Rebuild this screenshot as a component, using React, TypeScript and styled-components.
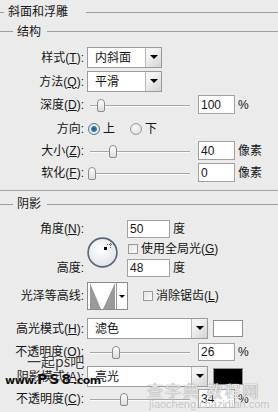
import styled, { createGlobalStyle } from 'styled-components';

const Global = createGlobalStyle`
  html, body {
    margin: 0;
    padding: 0;
    background: #ebebeb;
  }
  body {
    font-family: 'Liberation Sans', 'Noto Sans CJK SC', sans-serif;
    font-size: 12px;
    color: #161616;
  }
`;

const Panel = styled.div`
  position: relative;
  width: 278px;
  height: 412px;
  overflow: hidden;
  background: #ebebeb;
`;

const Legend = styled.div<{ $h: number; $lead: number; $gap: number }>`
  display: flex;
  align-items: center;
  height: ${(p) => p.$h}px;
  line-height: 1;
  white-space: nowrap;
  &::before {
    content: '';
    width: ${(p) => p.$lead}px;
    height: 1px;
    background: #9e9e9e;
    margin-right: 4px;
  }
  &::after {
    content: '';
    flex: 1;
    height: 1px;
    background: #9e9e9e;
    margin-left: ${(p) => p.$gap}px;
  }
`;

const Separator = styled.div`
  margin-top: 8px;
  height: 1px;
  background: #a2a2a2;
`;

const Row = styled.div<{ $h: number; $mt?: number }>`
  display: flex;
  align-items: center;
  height: ${(p) => p.$h}px;
  margin-top: ${(p) => p.$mt ?? 0}px;
  line-height: 1;
  white-space: nowrap;
`;

const Label = styled.span`
  box-sizing: border-box;
  width: 87px;
  padding-right: 3px;
  text-align: right;
  white-space: nowrap;
`;

const Select = styled.div<{ $w: number }>`
  box-sizing: border-box;
  display: flex;
  width: ${(p) => p.$w}px;
  height: 100%;
  border: 1px solid #9b9b9b;
  background: #fff;
`;

const SelectText = styled.span`
  flex: 1;
  display: flex;
  align-items: center;
  padding-left: 7px;
`;

const DropBtn = styled.span`
  width: 15px;
  display: flex;
  align-items: center;
  justify-content: center;
  border-left: 1px solid #b8b8b8;
  background: linear-gradient(135deg, #f4f4f4 30%, #d2d2d2);
  &::after {
    content: '';
    margin-top: -1px;
    border-left: 4px solid transparent;
    border-right: 4px solid transparent;
    border-top: 4px solid #000;
  }
`;

const Swatch = styled.span<{ $color: string }>`
  box-sizing: border-box;
  width: 30px;
  height: 17px;
  margin-left: 5px;
  border: 1px solid #8f8f8f;
  background: ${(p) => p.$color};
`;

const Slider = styled.div`
  position: relative;
  width: 111px;
  height: 100%;
  &::before {
    content: '';
    position: absolute;
    left: 3px;
    width: 100px;
    top: 50%;
    height: 1px;
    background: #a6a6a6;
    box-shadow: 0 1px 0 #fafafa;
  }
`;

const Thumb = styled.span`
  position: absolute;
  top: 50%;
  width: 6px;
  height: 11px;
  margin-top: -6px;
  margin-left: -4px;
  border: 1px solid #8b8b8b;
  border-radius: 4px 4px 2px 2px;
  background: linear-gradient(#ffffff, #dcdcdc);
`;

const NumBox = styled.span<{ $w?: number }>`
  box-sizing: border-box;
  display: flex;
  align-items: center;
  width: ${(p) => p.$w ?? 37}px;
  height: 100%;
  padding-left: 2px;
  border: 1px solid #a2a2a2;
  background: #fff;
`;

const Unit = styled.span`
  margin-left: 3px;
`;

const Radio = styled.span<{ $on?: boolean }>`
  box-sizing: border-box;
  width: 12px;
  height: 12px;
  border-radius: 50%;
  border: 1px solid ${(p) => (p.$on ? '#5d7388' : '#9a9a9a')};
  background: ${(p) =>
    p.$on
      ? 'radial-gradient(circle, #1d4d78 0, #3f7fae 2.5px, #e9eef2 3.5px, #cfd6dd 100%)'
      : 'radial-gradient(circle at 40% 40%, #fbfbfb, #d4d4d4)'};
`;

const RadioText = styled.span<{ $gap: number }>`
  margin-left: 3px;
  margin-right: ${(p) => p.$gap}px;
`;

const Check = styled.span<{ $ml: number }>`
  box-sizing: border-box;
  width: 10px;
  height: 10px;
  margin-left: ${(p) => p.$ml}px;
  margin-right: 3px;
  border: 1px solid #9a9a9a;
  background: linear-gradient(135deg, #e4e4e4, #fafafa);
`;

const AngleGrid = styled.div`
  display: grid;
  grid-template-columns: 87px 40px 1fr;
  grid-template-rows: 18px 17px 18px;
  row-gap: 2px;
  margin-top: 3px;
  line-height: 1;
  white-space: nowrap;
`;

const Cell = styled.div<{ $col: number; $row: number }>`
  grid-column: ${(p) => p.$col};
  grid-row: ${(p) => p.$row};
  display: flex;
  align-items: center;
`;

const Dial = styled.div`
  grid-column: 2;
  grid-row: 1 / 4;
  margin-top: 17px;
  width: 31px;
  height: 31px;
`;

const Contour = styled.div`
  box-sizing: border-box;
  display: flex;
  width: 41px;
  height: 100%;
  border: 1px solid #8a8a8a;
  background: #fff;
`;

const ContourArrow = styled.span`
  flex: 1;
  display: flex;
  align-items: center;
  justify-content: center;
  border-left: 1px solid #9a9a9a;
  &::after {
    content: '';
    border-left: 3px solid transparent;
    border-right: 3px solid transparent;
    border-top: 3px solid #000;
  }
`;

const Mark = styled.div<{ $x: number; $y: number }>`
  position: absolute;
  left: ${(p) => p.$x}px;
  top: ${(p) => p.$y}px;
  white-space: nowrap;
  pointer-events: none;
  line-height: 1;
`;

const MarkCn = styled.span`
  font-family: 'Noto Sans CJK SC', sans-serif;
  font-size: 14px;
  color: #3a3a3a;
  text-shadow: 0 0 2px #fff;
`;

const MarkUrl = styled.span<{ $size: number; $spacing?: number }>`
  font-family: 'DejaVu Sans', sans-serif;
  font-weight: bold;
  font-size: ${(p) => p.$size}px;
  letter-spacing: ${(p) => p.$spacing ?? -0.5}px;
  color: #111;
  text-shadow: 0 0 2px #fff;
`;

const MarkSite = styled.span`
  font-family: 'Noto Sans CJK SC', sans-serif;
  font-size: 16px;
  letter-spacing: 2px;
  color: rgba(255, 255, 255, 0.75);
  text-shadow: 0 0 1px #9a9a9a, 0 0 1px #9a9a9a;
`;

const MarkSiteUrl = styled.span`
  font-family: 'Liberation Sans', sans-serif;
  font-size: 11px;
  color: #c2c2c2;
  text-shadow: 0 0 1px #fff;
`;

const sliderRow = (
  label: React.ReactNode,
  pos: number,
  value: string,
  unit: string,
  mt: number,
  h = 19
) => (
  <Row $h={h} $mt={mt}>
    <Label>{label}</Label>
    <Slider>
      <Thumb style={{ left: pos }} />
    </Slider>
    <NumBox>{value}</NumBox>
    <Unit>{unit}</Unit>
  </Row>
);

export default function App() {
  return (
    <Panel>
      <Global />
      <Legend $h={24} $lead={4} $gap={18}>斜面和浮雕</Legend>
      <Legend $h={15} $lead={13} $gap={6}>结构</Legend>

      <Row $h={21} $mt={8}>
        <Label>
          样式(<u>T</u>):
        </Label>
        <Select $w={75}>
          <SelectText>内斜面</SelectText>
          <DropBtn />
        </Select>
      </Row>
      <Row $h={21} $mt={3}>
        <Label>
          方法(<u>Q</u>):
        </Label>
        <Select $w={75}>
          <SelectText>平滑</SelectText>
          <DropBtn />
        </Select>
      </Row>
      {sliderRow(<>深度(<u>D</u>):</>, 14, '100', '%', 3)}
      <Row $h={23} $mt={3}>
        <Label>方向:</Label>
        <Radio $on style={{ marginLeft: 1 }} />
        <RadioText $gap={15}>上</RadioText>
        <Radio />
        <RadioText $gap={0}>下</RadioText>
      </Row>
      {sliderRow(<>大小(<u>Z</u>):</>, 26, '40', '像素', 1)}
      {sliderRow(<>软化(<u>F</u>):</>, 5, '0', '像素', 3)}

      <Separator />
      <Legend $h={26} $lead={13} $gap={6}>阴影</Legend>

      <AngleGrid>
        <Cell $col={1} $row={1}>
          <Label>
            角度(<u>N</u>):
          </Label>
        </Cell>
        <Dial>
          <svg width="31" height="31" viewBox="0 0 31 31">
            <defs>
              <radialGradient id="dialFill" cx="45%" cy="40%" r="65%">
                <stop offset="0" stopColor="#ffffff" />
                <stop offset="1" stopColor="#dfe2e8" />
              </radialGradient>
            </defs>
            <circle cx="15.5" cy="15.5" r="14.4" fill="url(#dialFill)" stroke="#5a6677" strokeWidth="1.6" />
            <rect x="17" y="10" width="3" height="3" fill="#000" />
            <path d="M20 7.5h7M23.5 4v7" stroke="#555" strokeWidth="1" strokeDasharray="1 1" />
          </svg>
        </Dial>
        <Cell $col={3} $row={1}>
          <NumBox $w={43}>50</NumBox>
          <Unit>度</Unit>
        </Cell>
        <Cell $col={3} $row={2}>
          <Check $ml={1} />
          <span>
            使用全局光(<u>G</u>)
          </span>
        </Cell>
        <Cell $col={1} $row={3}>
          <Label>高度:</Label>
        </Cell>
        <Cell $col={3} $row={3}>
          <NumBox $w={43}>48</NumBox>
          <Unit>度</Unit>
        </Cell>
      </AngleGrid>

      <Row $h={28} $mt={5}>
        <Label>光泽等高线:</Label>
        <Contour>
          <svg width="28" height="26" viewBox="0 0 28 26">
            <polygon points="2,0 13,26 2,26" fill="#9a9a9a" />
            <polygon points="27,0 27,26 15,26" fill="#9a9a9a" />
          </svg>
          <ContourArrow />
        </Contour>
        <Check $ml={15} />
        <span>
          消除锯齿(<u>L</u>)
        </span>
      </Row>

      <Row $h={21} $mt={8}>
        <Label>
          高光模式(<u>H</u>):
        </Label>
        <Select $w={121}>
          <SelectText>滤色</SelectText>
          <DropBtn />
        </Select>
        <Swatch $color="#ffffff" />
      </Row>
      {sliderRow(<>不透明度(<u>O</u>):</>, 29, '26', '%', 4, 18)}
      <Row $h={21} $mt={5}>
        <Label>
          阴影模式(<u>A</u>):
        </Label>
        <Select $w={121}>
          <SelectText>亮光</SelectText>
          <DropBtn />
        </Select>
        <Swatch $color="#000000" />
      </Row>
      {sliderRow(<>不透明度(<u>C</u>):</>, 37, '34', '%', 2)}

      <Mark $x={27} $y={354}>
        <MarkCn>一起ps吧</MarkCn>
      </Mark>
      <Mark $x={5} $y={372}>
        <MarkUrl $size={11}>www.</MarkUrl>
        <MarkUrl $size={14} $spacing={2}>PS8</MarkUrl>
        <MarkUrl $size={11}>.com</MarkUrl>
      </Mark>
      <Mark $x={147} $y={382}>
        <MarkSite>查字典 教程网</MarkSite>
      </Mark>
      <Mark $x={149} $y={398}>
        <MarkSiteUrl>jiaocheng.chazidian.com</MarkSiteUrl>
      </Mark>
    </Panel>
  );
}
